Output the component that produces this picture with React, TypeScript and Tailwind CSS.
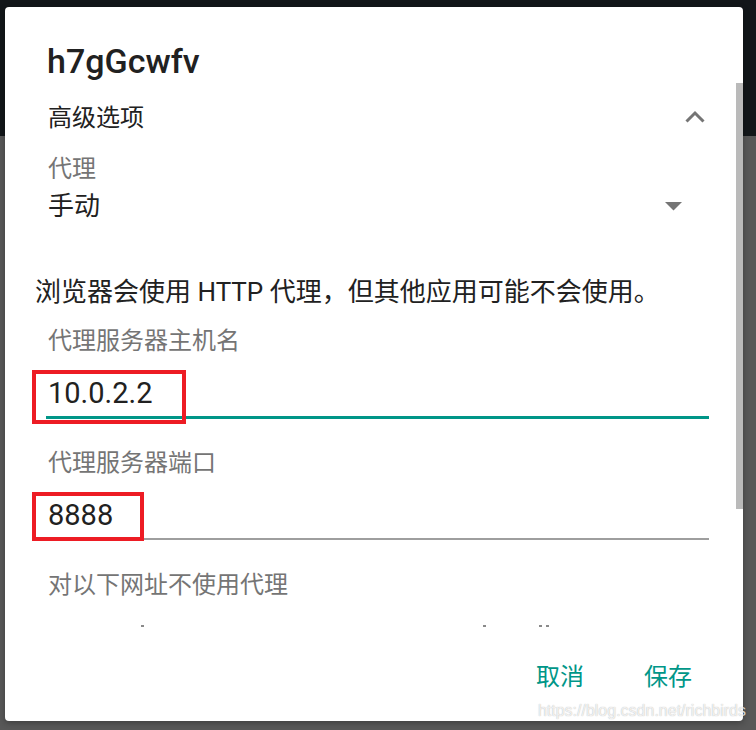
import type { ReactNode } from 'react';

const sans = "font-[family-name:Roboto,'Noto_Sans_CJK_SC',sans-serif]";

function RedMark({ className }: { className: string }) {
    return <div className={`pointer-events-none absolute border-4 border-[#ed1c24] ${className}`} />;
}

function Field({
    value,
    line,
    mark,
}: {
    value: string;
    line: ReactNode;
    mark: string;
}) {
    return (
        <div className="relative">
            <div className="ml-[43px] h-[40px] text-[29px] leading-[40px] text-[#212121]">{value}</div>
            {line}
            <RedMark className={mark} />
        </div>
    );
}

function ChevronUp() {
    return (
        <svg width="20" height="13" viewBox="0 0 20 13" fill="none">
            <polyline points="1.5,11.5 10,3 18.5,11.5" stroke="#757575" strokeWidth="3" />
        </svg>
    );
}

function DropArrow() {
    return (
        <svg width="18" height="9" viewBox="0 0 18 9">
            <path d="M0 0H17L8.5 8.5Z" fill="#757575" />
        </svg>
    );
}

export default function App() {
    return (
        <div
            className={`relative h-[730px] w-[756px] overflow-hidden bg-[linear-gradient(to_bottom,#121619_0,#121619_136px,#585858_136px)] pl-[5px] pt-[7px] ${sans}`}
        >
            <div className="relative flex h-[714px] w-[738px] flex-col rounded-[4px] bg-white pt-[34px] shadow-[0_2px_6px_rgba(0,0,0,0.3)]">
                <div className="ml-[42px] h-[40px] text-[34px] font-medium leading-[40px] text-[#212121]">
                    h7gGcwfv
                </div>

                <div className="mt-[13px] flex h-[48px] items-center justify-between pl-[43px] pr-[38px]">
                    <span className="text-[24px] leading-[48px] text-[#212121]">高级选项</span>
                    <span className="-mt-[3px]">
                        <ChevronUp />
                    </span>
                </div>

                <div className="ml-[43px] mt-[12px] h-[30px] text-[24px] leading-[30px] text-[#757575]">代理</div>
                <div className="mt-[4px] flex h-[36px] items-center justify-between pl-[43px] pr-[60px]">
                    <span className="text-[26px] leading-[36px] text-[#212121]">手动</span>
                    <DropArrow />
                </div>

                <div className="ml-[30px] mt-[50px] h-[36px] text-[26px] leading-[36px] text-[#212121]">
                    浏览器会使用 HTTP 代理，但其他应用可能不会使用。
                </div>

                <div className="ml-[43px] mt-[16px] h-[30px] text-[24px] leading-[30px] text-[#757575]">
                    代理服务器主机名
                </div>
                <div className="mt-[17px]">
                    <Field
                        value="10.0.2.2"
                        line={<div className="ml-[41px] mr-[34px] mt-[3px] h-[3px] bg-[#009688]" />}
                        mark="left-[27px] -top-[3px] h-[54px] w-[154px]"
                    />
                </div>

                <div className="ml-[43px] mt-[29px] h-[30px] text-[24px] leading-[30px] text-[#757575]">
                    代理服务器端口
                </div>
                <div className="mt-[17px]">
                    <Field
                        value="8888"
                        line={<div className="ml-[41px] mr-[34px] mt-[3px] h-[2px] bg-[#9e9e9e]" />}
                        mark="left-[27px] -top-[3px] h-[49px] w-[112px]"
                    />
                </div>

                <div className="ml-[43px] mt-[30px] h-[30px] text-[24px] leading-[30px] text-[#757575]">
                    对以下网址不使用代理
                </div>

                {/* top of the next field's text, clipped by the scroll area */}
                <div className="mt-[25px] flex h-[2px]">
                    <span className="ml-[136px] h-[2px] w-[3px] bg-[#8a8a8a]" />
                    <span className="ml-[339px] h-[2px] w-[3px] bg-[#8a8a8a]" />
                    <span className="ml-[53px] h-[2px] w-[3px] bg-[#8a8a8a]" />
                    <span className="ml-[4px] h-[2px] w-[3px] bg-[#8a8a8a]" />
                </div>

                <div className="mt-[35px] flex h-[30px] justify-end gap-[60px] pr-[51px] text-[24px] leading-[30px] text-[#009688]">
                    <button className="cursor-pointer">取消</button>
                    <button className="cursor-pointer">保存</button>
                </div>

                <div className="absolute right-0 top-[76px] h-[426px] w-[7px] bg-[#bababa]" />
            </div>

            <div className="absolute right-[10px] top-[703px] font-[family-name:'Liberation_Sans',sans-serif] text-[16px] leading-[16px] text-white/80 [text-shadow:0_0_1px_rgba(0,0,0,0.35)]">
                https://blog.csdn.net/richbirds
            </div>
        </div>
    );
}
